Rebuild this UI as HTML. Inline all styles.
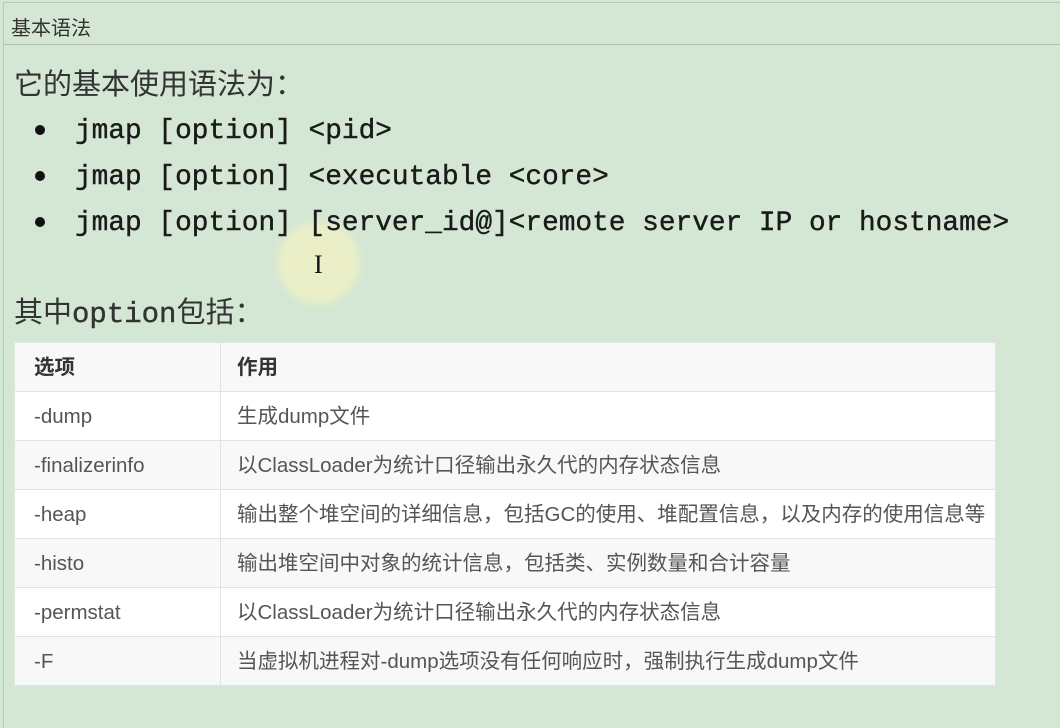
<!DOCTYPE html>
<html><head><meta charset="utf-8"><style>
body{margin:0;width:1060px;height:728px;background:#d4e7d4;position:relative;overflow:hidden;font-family:"Liberation Sans","Noto Sans CJK SC",sans-serif;}
.frame{position:absolute;left:3px;top:2px;right:0;bottom:0;border-left:1px solid #b9c9b9;border-top:1px solid #b9c9b9;}
.title{position:absolute;left:11px;top:12px;font-size:20px;color:#333;}
.sep{position:absolute;left:4px;right:0;top:44px;height:1px;background:#aebfae;}
.h{position:absolute;left:14px;font-size:29px;color:#333;line-height:40px;}
.code{position:absolute;left:75px;font-family:"Liberation Mono",monospace;font-size:27.8px;color:#1a1a1a;-webkit-text-stroke:0.4px #1a1a1a;white-space:pre;line-height:36px;}
.dot{position:absolute;left:35px;width:10px;height:10px;border-radius:50%;background:#111;}
table{position:absolute;left:14px;top:342px;width:982px;border-collapse:collapse;font-size:20.5px;color:#555;}
td{height:48px;line-height:48px;border:1px solid #e3e3e3;padding:0 0 0 19px;vertical-align:middle;white-space:nowrap;}
td span{display:inline-block;vertical-align:middle;line-height:28px;}
td:first-child{width:186px;}
td:last-child{padding-left:16px;}
tr:nth-child(odd){background:#f8f8f8;}
tr:nth-child(even){background:#fff;}
tr:first-child td{font-weight:bold;color:#333;}
.glow{position:absolute;left:278px;top:222px;width:82px;height:82px;border-radius:50%;background:rgba(250,245,190,0.6);filter:blur(4px);}
</style></head><body>
<div class="frame"></div>
<div class="title">基本语法</div>
<div class="sep"></div>
<div class="h" style="top:65px">它的基本使用语法为：</div>
<div class="dot" style="top:125px"></div><div class="code" style="top:114px">jmap [option] &lt;pid&gt;</div>
<div class="dot" style="top:171px"></div><div class="code" style="top:160px">jmap [option] &lt;executable &lt;core&gt;</div>
<div class="glow"></div>
<div class="dot" style="top:217px"></div><div class="code" style="top:206px">jmap [option] [server_id@]&lt;remote server IP or hostname&gt;</div>
<div style="position:absolute;left:314px;top:250px;font-family:'Liberation Serif',serif;font-size:26px;color:#111;">I</div>
<div class="h" style="top:293px">其中<span style="font-family:'Liberation Mono',monospace;-webkit-text-stroke:0.4px #333">option</span>包括：</div>
<table>
<tr><td><span>选项</span></td><td><span>作用</span></td></tr>
<tr><td><span>-dump</span></td><td><span>生成dump文件</span></td></tr>
<tr><td><span>-finalizerinfo</span></td><td><span>以ClassLoader为统计口径输出永久代的内存状态信息</span></td></tr>
<tr><td><span>-heap</span></td><td><span>输出整个堆空间的详细信息，包括GC的使用、堆配置信息，以及内存的使用信息等</span></td></tr>
<tr><td><span>-histo</span></td><td><span>输出堆空间中对象的统计信息，包括类、实例数量和合计容量</span></td></tr>
<tr><td><span>-permstat</span></td><td><span>以ClassLoader为统计口径输出永久代的内存状态信息</span></td></tr>
<tr><td><span>-F</span></td><td><span>当虚拟机进程对-dump选项没有任何响应时，强制执行生成dump文件</span></td></tr>
</table>
</body></html>
